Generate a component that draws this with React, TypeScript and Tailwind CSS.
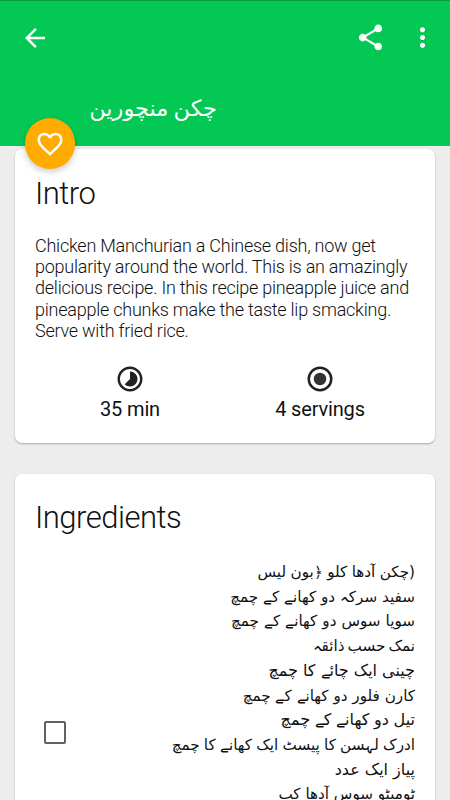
import React from 'react';

const introText = [
  'Chicken Manchurian a Chinese dish, now get',
  'popularity around the world. This is an amazingly',
  'delicious recipe. In this recipe pineapple juice and',
  'pineapple chunks make the taste lip smacking.',
  'Serve with fried rice.',
];

const ingredients = [
  { text: '(چکن آدھا کلو ﴿بون لیس', size: 'text-[15.2px] [word-spacing:-0.4px]' },
  { text: 'سفید سرکہ دو کھانے کے چمچ', size: 'text-[15.2px]' },
  { text: 'سویا سوس دو کھانے کے چمچ', size: 'text-[15.2px] [word-spacing:0.2px]' },
  { text: 'نمک حسب ذائقہ', size: 'text-[15.2px] [word-spacing:-1.8px]' },
  { text: 'چینی ایک چائے کا چمچ', size: 'text-[16px]' },
  { text: 'کارن فلور دو کھانے کے چمچ', size: 'text-[15.2px]' },
  { text: 'تیل دو کھانے کے چمچ', size: 'text-[16px] [word-spacing:-0.4px]' },
  { text: 'ادرک لہسن کا پیسٹ ایک کھانے کا چمچ', size: 'text-[15.2px] [word-spacing:-0.6px]' },
  { text: 'پیاز ایک عدد', size: 'text-[16px]' },
  { text: 'ٹومیٹو سوس آدھا کپ', size: 'text-[15.2px]' },
];

function Header() {
  return (
    <header className="h-[146px] shrink-0 bg-[#03c853] border-t border-[#0a9c40] text-white">
      <div className="flex items-center h-[73px] pl-5 pr-3">
        <svg className="size-[30px]" viewBox="0 0 24 24" fill="currentColor">
          <path d="M20 11H7.83l5.59-5.59L12 4l-8 8 8 8 1.41-1.41L7.83 13H20v-2z" />
        </svg>
        <svg className="size-[31px] ml-auto" viewBox="0 0 24 24" fill="currentColor">
          <path d="M18 16.08c-.76 0-1.44.3-1.96.77L8.91 12.7c.05-.23.09-.46.09-.7s-.04-.47-.09-.7l7.05-4.11c.54.5 1.25.81 2.04.81 1.66 0 3-1.34 3-3s-1.34-3-3-3-3 1.34-3 3c0 .24.04.47.09.7L8.04 9.81C7.5 9.31 6.79 9 6 9c-1.66 0-3 1.34-3 3s1.34 3 3 3c.79 0 1.5-.31 2.04-.81l7.12 4.16c-.05.21-.08.43-.08.65 0 1.61 1.31 2.92 2.92 2.92s2.92-1.31 2.92-2.92-1.31-2.92-2.92-2.92z" />
        </svg>
        <svg className="size-[31px] ml-[21px]" viewBox="0 0 24 24" fill="currentColor">
          <path d="M12 8c1.1 0 2-.9 2-2s-.9-2-2-2-2 .9-2 2 .9 2 2 2zm0 2c-1.1 0-2 .9-2 2s.9 2 2 2 2-.9 2-2-.9-2-2-2zm0 6c-1.1 0-2 .9-2 2s.9 2 2 2 2-.9 2-2-.9-2-2-2z" />
        </svg>
      </div>
      <h1 dir="rtl" className="w-[217px] pt-[18px] text-start text-[22.5px] leading-8 whitespace-nowrap [word-spacing:-2px] font-['DejaVu_Sans',sans-serif]">
        چکن منچورین
      </h1>
    </header>
  );
}

function FavoriteButton() {
  return (
    <button
      type="button"
      className="absolute left-[25px] top-[118px] flex h-[51px] w-[50px] items-center justify-center rounded-full bg-[#ffab00] text-white shadow-[0_3px_6px_rgba(0,0,0,0.2)]"
    >
      <svg className="size-[30px]" viewBox="0 0 24 24" fill="currentColor">
        <path d="M16.5 3c-1.74 0-3.41.81-4.5 2.09C10.91 3.81 9.24 3 7.5 3 4.42 3 2 5.42 2 8.5c0 3.78 3.4 6.86 8.55 11.54L12 21.35l1.45-1.32C18.6 15.36 22 12.28 22 8.5 22 5.42 19.58 3 16.5 3zm-4.4 15.55l-.1.1-.1-.1C7.14 14.24 4 11.39 4 8.5 4 6.5 5.5 5 7.5 5c1.54 0 3.04.99 3.57 2.36h1.87C13.46 5.99 14.96 5 16.5 5c2 0 3.5 1.5 3.5 3.5 0 2.89-3.14 5.74-7.9 10.05z" />
      </svg>
    </button>
  );
}

export default function App() {
  return (
    <div className="relative flex h-[800px] w-[450px] flex-col overflow-hidden bg-[#ededed] font-[Roboto,sans-serif] text-[#111]">
      <Header />
      <FavoriteButton />

      <main className="flex flex-col gap-[31px] px-[15px] pt-[3px]">
        {/* Intro */}
        <section className="h-[294px] shrink-0 rounded-[7px] bg-white px-5 shadow-[0_1px_2px_rgba(0,0,0,0.3)]">
          <h2 className="pt-[25px] text-[31px] leading-10 font-light tracking-[-0.5px]">Intro</h2>
          <div className="mt-[21px] text-[18px] leading-[21.2px] font-light tracking-[-0.24px]">
            {introText.map(line => (
              <p key={line} className="whitespace-nowrap">{line}</p>
            ))}
          </div>
          <div className="mt-[23px] grid grid-cols-2 text-center text-[20px] leading-7 tracking-[-0.15px]">
            <div className="flex flex-col items-center gap-px">
              <svg className="size-[30px]" viewBox="0 0 24 24" fill="#212121">
                <path d="M16.24 7.76C15.07 6.59 13.54 6 12 6v6l-4.24 4.24c2.34 2.34 6.14 2.34 8.49 0 2.34-2.34 2.34-6.14-.01-8.48zM12 2C6.48 2 2 6.48 2 12s4.48 10 10 10 10-4.48 10-10S17.52 2 12 2zm0 18c-4.42 0-8-3.58-8-8s3.58-8 8-8 8 3.58 8 8-3.58 8-8 8z" />
              </svg>
              <span>35 min</span>
            </div>
            <div className="flex flex-col items-center gap-px">
              <svg className="size-[30px]" viewBox="0 0 24 24" fill="none" stroke="#212121" strokeWidth={2}>
                <circle cx="12" cy="12" r="9" />
                <circle cx="12" cy="12" r="5" fill="#333" stroke="none" />
              </svg>
              <span>4 servings</span>
            </div>
          </div>
        </section>

        {/* Ingredients */}
        <section className="h-[440px] shrink-0 rounded-[7px] bg-white px-5 shadow-[0_1px_2px_rgba(0,0,0,0.3)]">
          <h2 className="pt-6 text-[31px] leading-10 font-light tracking-[-0.5px]">Ingredients</h2>
          <div className="mt-[22px] flex items-start">
            <span className="ml-[9px] mt-[161px] h-[23px] w-[22px] shrink-0 rounded-[2px] border-2 border-[#616161]" />
            <div dir="rtl" className="flex-1 leading-[24.7px] font-['DejaVu_Sans',sans-serif]">
              {ingredients.map(item => (
                <p key={item.text} className={`whitespace-nowrap ${item.size}`}>{item.text}</p>
              ))}
            </div>
          </div>
        </section>
      </main>
    </div>
  );
}
